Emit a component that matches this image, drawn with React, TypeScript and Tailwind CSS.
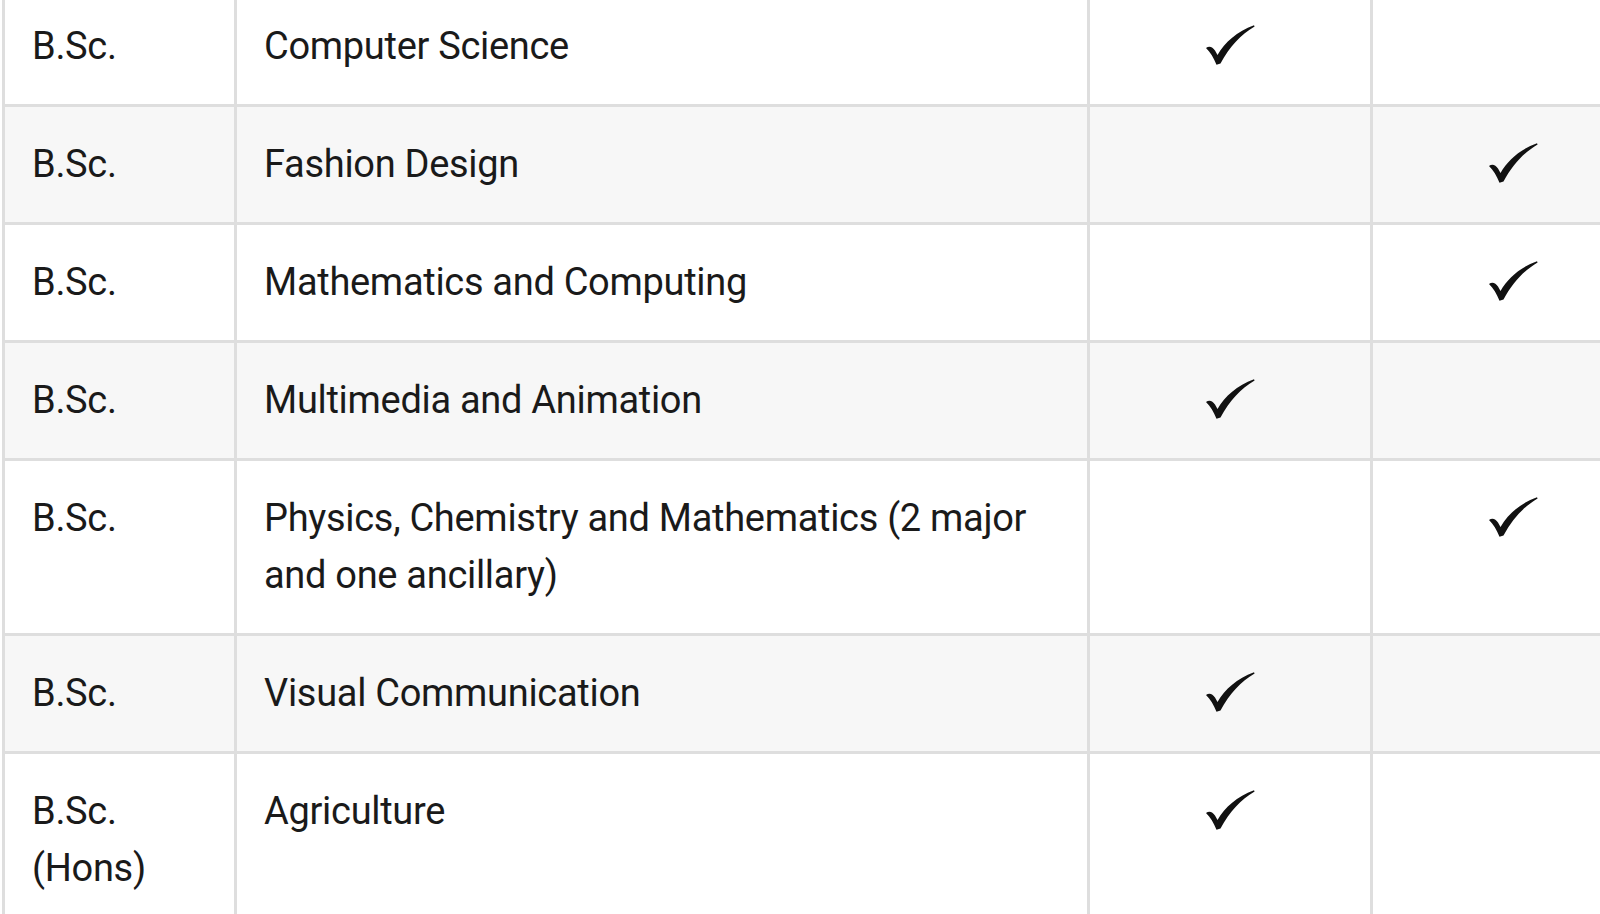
import React from 'react';

type Row = { degree: string; course: string; a?: boolean; b?: boolean };

const rows: Row[] = [
  { degree: 'B.Sc.', course: 'Computer Science', a: true },
  { degree: 'B.Sc.', course: 'Fashion Design', b: true },
  { degree: 'B.Sc.', course: 'Mathematics and Computing', b: true },
  { degree: 'B.Sc.', course: 'Multimedia and Animation', a: true },
  { degree: 'B.Sc.', course: 'Physics, Chemistry and Mathematics (2 major and one ancillary)', b: true },
  { degree: 'B.Sc.', course: 'Visual Communication', a: true },
  { degree: 'B.Sc. (Hons)', course: 'Agriculture', a: true },
];

function Check() {
  return (
    <svg width="50" height="42" viewBox="0 0 50 42" className="mx-auto block">
      <path
        d="M1 24 C4 21.5 7.5 22.5 10 26.5 L12.5 31 C20 18 32 7.5 49 1.2 L49.6 2.4 C36 10.5 24.5 22.5 15.5 39.5 L11.5 40.8 C8.5 33.5 5.5 28.5 1 24 Z"
        fill="#111"
      />
    </svg>
  );
}

export default function App() {
  return (
    <div className="w-[1600px] h-[914px] overflow-hidden bg-white" style={{ fontFamily: 'Roboto, "Noto Sans", sans-serif' }}>
      <table className="border-collapse -mt-[14px] ml-[2px] text-[38px] tracking-[-0.3px] leading-[57px] text-[#1a1a1a] table-fixed w-[1652px]">
        <colgroup>
          <col className="w-[232px]" />
          <col className="w-[853px]" />
          <col className="w-[283px]" />
          <col className="w-[283px]" />
        </colgroup>
        <tbody>
          {rows.map((r, i) => (
            <tr key={i} className={i % 2 === 1 ? 'bg-[#f7f7f7]' : 'bg-white'}>
              <td className="border-[3px] border-[#dedede] px-[27px] py-[29px] align-top">{r.degree}</td>
              <td className="border-[3px] border-[#dedede] px-[27px] py-[29px] align-top">{r.course}</td>
              <td className="border-[3px] border-[#dedede] px-[27px] py-[35px] align-top">{r.a && <Check />}</td>
              <td className="border-[3px] border-[#dedede] px-[27px] py-[35px] align-top">{r.b && <Check />}</td>
            </tr>
          ))}
        </tbody>
      </table>
    </div>
  );
}
